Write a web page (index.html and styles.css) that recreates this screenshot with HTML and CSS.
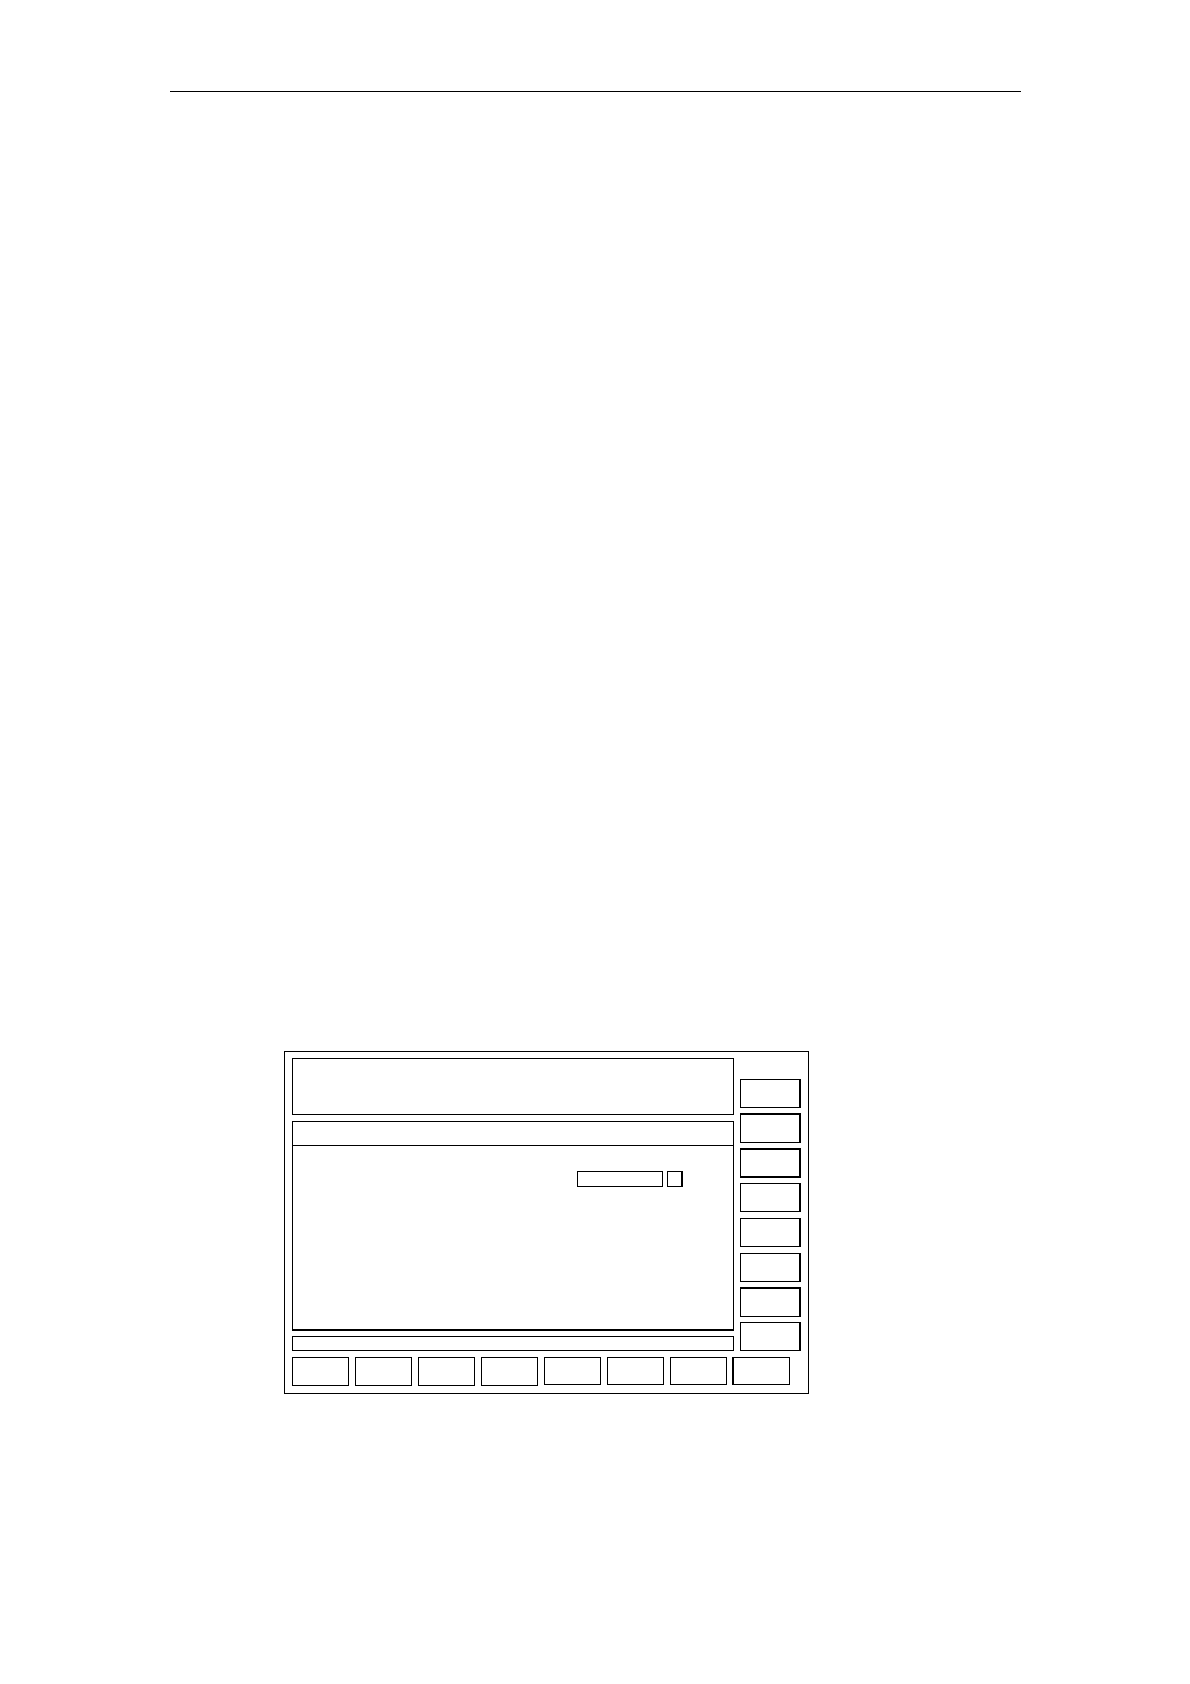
FILE: index.html
```html
<!DOCTYPE html>
<html lang="en">
<head>
<meta charset="utf-8">
<meta name="viewport" content="width=device-width, initial-scale=1">
<title>Operating screen</title>
<link rel="stylesheet" href="styles.css">
</head>
<body>
<header class="page-header"></header>
<main class="screen">
  <div class="panels">
    <section class="status-area"></section>
    <section class="window">
      <div class="title-bar"></div>
      <form class="fields">
        <input class="field value" type="text" aria-label="Value">
        <input class="field unit" type="text" aria-label="Unit">
      </form>
    </section>
    <div class="message-line"></div>
  </div>
  <nav class="side-keys" aria-label="Vertical softkeys">
    <button class="key" type="button" aria-label="Vertical softkey 1"></button>
    <button class="key heavy-top" type="button" aria-label="Vertical softkey 2"></button>
    <button class="key heavy-top heavy-bottom" type="button" aria-label="Vertical softkey 3"></button>
    <button class="key" type="button" aria-label="Vertical softkey 4"></button>
    <button class="key" type="button" aria-label="Vertical softkey 5"></button>
    <button class="key" type="button" aria-label="Vertical softkey 6"></button>
    <button class="key heavy-top" type="button" aria-label="Vertical softkey 7"></button>
    <button class="key" type="button" aria-label="Vertical softkey 8"></button>
  </nav>
  <nav class="bottom-keys" aria-label="Horizontal softkeys">
    <button class="key" type="button" aria-label="Horizontal softkey 1"></button>
    <button class="key" type="button" aria-label="Horizontal softkey 2"></button>
    <button class="key" type="button" aria-label="Horizontal softkey 3"></button>
    <button class="key" type="button" aria-label="Horizontal softkey 4"></button>
    <button class="key short" type="button" aria-label="Horizontal softkey 5"></button>
    <button class="key short" type="button" aria-label="Horizontal softkey 6"></button>
    <button class="key short" type="button" aria-label="Horizontal softkey 7"></button>
    <button class="key short heavy-left" type="button" aria-label="Horizontal softkey 8"></button>
  </nav>
</main>
</body>
</html>
```

FILE: styles.css
```css
* {
  box-sizing: border-box;
}

body {
  margin: 0;
  padding: 91px 169px 290px 170px;
  background: #fff;
  color: #000;
  font-family: "Liberation Sans", Arial, sans-serif;
  font-size: 12px;
}

.page-header {
  border-bottom: 1px solid #000;
}

.screen {
  display: grid;
  grid-template-columns: 1fr 61px;
  gap: 6px;
  max-width: 525px;
  margin: 959px 0 0 114px;
  padding: 6px 7px 7px;
  border: 1px solid #000;
}

.panels {
  display: flex;
  flex-direction: column;
  gap: 6px;
}

.status-area {
  height: 57px;
  border: 1px solid #000;
}

.window {
  flex: 1;
  border: 1px solid #000;
  box-shadow: 0 1px 0 #000;
}

.title-bar {
  height: 24px;
  border-bottom: 1px solid #000;
}

.title-bar {
  height: 24px;
}

.fields {
  display: flex;
  justify-content: flex-end;
  gap: 4px;
  padding: 25px 50px 0 0;
}

.field {
  height: 16px;
  margin: 0;
  padding: 0 2px;
  border: 1px solid #000;
  border-radius: 0;
  background: #fff;
  font: inherit;
}

.value {
  width: 86px;
}

.unit {
  width: 16px;
  border-right-width: 2px;
}

.message-line {
  height: 15px;
  border: 1px solid #000;
}

.side-keys {
  display: grid;
  grid-template-rows: 29px 30px 30px 30px 30px 29px 30px 29px;
  row-gap: 5px;
  padding-top: 21px;
}

.key {
  height: 29px;
  margin: 0;
  padding: 0;
  border: 1px solid #000;
  border-radius: 0;
  background: #fff;
}

.side-keys .key {
  border-right-width: 2px;
}

.key.heavy-top {
  height: 30px;
  border-top-width: 2px;
}

.key.heavy-bottom {
  border-bottom-width: 2px;
}

.bottom-keys {
  display: grid;
  grid-column: 1 / -1;
  grid-template-columns: repeat(8, 1fr);
  column-gap: 6px;
  padding-right: 11px;
}

.key.short {
  height: 28px;
}

.heavy-left {
  box-shadow: -1px 0 0 #000;
}
```
